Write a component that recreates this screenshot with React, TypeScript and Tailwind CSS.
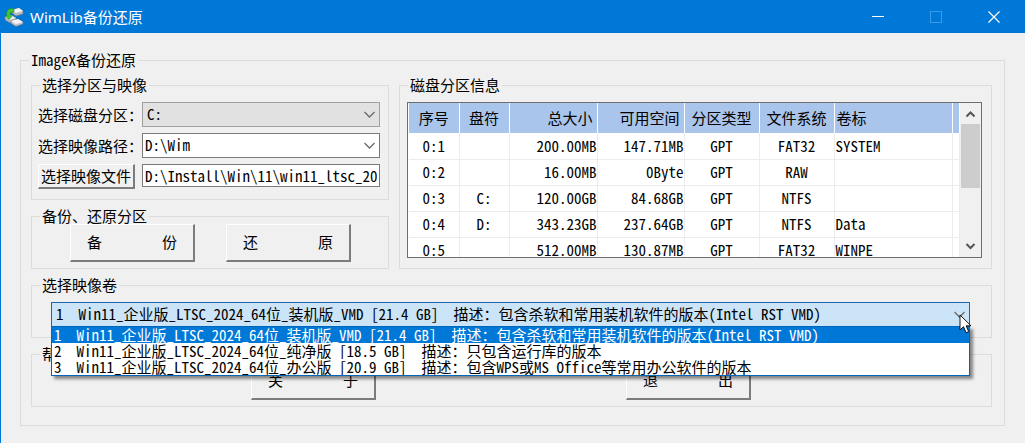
import { useState } from 'react';
import type { ReactNode } from 'react';
import clsx from 'clsx';

interface Partition {
  id: string;
  letter: string;
  total: string;
  free: string;
  type: string;
  fs: string;
  label: string;
}

const PARTITIONS: Partition[] = [
  { id: '0:1', letter: '', total: '200.00MB', free: '147.71MB', type: 'GPT', fs: 'FAT32', label: 'SYSTEM' },
  { id: '0:2', letter: '', total: '16.00MB', free: '0Byte', type: 'GPT', fs: 'RAW', label: '' },
  { id: '0:3', letter: 'C:', total: '120.00GB', free: '84.68GB', type: 'GPT', fs: 'NTFS', label: '' },
  { id: '0:4', letter: 'D:', total: '343.23GB', free: '237.64GB', type: 'GPT', fs: 'NTFS', label: 'Data' },
  { id: '0:5', letter: '', total: '512.00MB', free: '130.87MB', type: 'GPT', fs: 'FAT32', label: 'WINPE' },
];

const VOLUMES = [
  '1\u00a0\u00a0Win11_企业版_LTSC_2024_64位_装机版_VMD [21.4 GB]\u00a0\u00a0描述：包含杀软和常用装机软件的版本(Intel RST VMD)',
  '2\u00a0\u00a0Win11_企业版_LTSC_2024_64位_纯净版 [18.5 GB]\u00a0\u00a0描述：只包含运行库的版本',
  '3\u00a0\u00a0Win11_企业版_LTSC_2024_64位_办公版 [20.9 GB]\u00a0\u00a0描述：包含WPS或MS Office等常用办公软件的版本',
];

function AppIcon() {
  return (
    <svg width="20" height="20" viewBox="0 0 20 20" aria-hidden="true">
      <path d="M8 3l7-2 4 3v3l-7 2-4-3z" fill="#b9bcc0" stroke="#6d7278" strokeWidth="0.6" />
      <path d="M8 3l7-2 4 3-7 2z" fill="#f1f2f3" />
      <path d="M1 10l6-2 5 3v3l-6 2-5-3z" fill="#b4b7bb" stroke="#6d7278" strokeWidth="0.6" />
      <path d="M1 10l6-2 5 3-6 2z" fill="#e8eaeb" />
      <path d="M7 14l7-2 5 3v2l-7 2.500-5-3z" fill="#c3c5d0" stroke="#676b74" strokeWidth="0.6" />
      <path d="M7 14l7-2 5 3-7 2z" fill="#f4f4f6" />
      <path d="M10 2C5 0 1.500 4 3 9l-2-.5L5 12.500l3.500-4-2.300.3C5.500 6 7 5 10 5z" fill="#3fc531" stroke="#1f8a1c" strokeWidth="0.5" />
    </svg>
  );
}

function Chevron() {
  return (
    <svg
      className="pointer-events-none absolute top-1/2 right-1 -translate-y-1/2"
      width="13"
      height="9"
      viewBox="0 0 13 9"
      fill="none"
      aria-hidden="true"
    >
      <path d="M1.500 1.500l5 5 5-5" stroke="#6a6a6a" strokeWidth="1.300" />
    </svg>
  );
}

interface GroupProps {
  title: string;
  className?: string;
  bodyClassName?: string;
  children: ReactNode;
}

function Group({ title, className, bodyClassName, children }: GroupProps) {
  return (
    <fieldset className={clsx('min-w-0 border border-[#dcdcdc]', className)}>
      <legend className="ml-2 px-0.5 leading-4">{title}</legend>
      <div className={bodyClassName}>{children}</div>
    </fieldset>
  );
}

function PushButton({ className, children }: { className?: string; children: ReactNode }) {
  return (
    <button
      type="button"
      className={clsx(
        'border-t border-r-2 border-b-2 border-l border-t-white border-r-[#7c7c7c] border-b-[#7c7c7c] border-l-white bg-[#f0f0f0] text-center whitespace-pre',
        className
      )}
    >
      {children}
    </button>
  );
}

function TitleBar() {
  return (
    <header className="flex h-[33px] items-center bg-[#0078d7] pl-1 text-white">
      <AppIcon />
      <h1 className="ml-1.5 flex-1 font-['Noto_Sans','Noto_Sans_CJK_SC',sans-serif] text-[15px] leading-5 font-normal">
        WimLib备份还原
      </h1>
      <button type="button" aria-label="最小化" className="flex h-full w-[58px] items-center justify-center">
        <svg width="12" height="12" viewBox="0 0 12 12">
          <path d="M0 5.500h12" stroke="#fff" />
        </svg>
      </button>
      <button type="button" aria-label="最大化" disabled className="flex h-full w-[58px] items-center justify-center">
        <svg width="12" height="12" viewBox="0 0 12 12" fill="none">
          <rect x="0.500" y="0.500" width="11" height="11" stroke="#3a9bea" />
        </svg>
      </button>
      <button type="button" aria-label="关闭" className="mr-0.5 flex h-full w-[58px] items-center justify-center">
        <svg width="12" height="12" viewBox="0 0 12 12">
          <path d="M0.500 0.500l11 11M11.500 0.500l-11 11" stroke="#fff" strokeWidth="1.200" />
        </svg>
      </button>
    </header>
  );
}

function PartitionTable() {
  return (
    <div className="flex h-[156px] border border-[#6e6e6e] bg-white pl-px">
      <div className="min-w-0 flex-1 overflow-hidden">
        <table className="w-full table-fixed">
          <colgroup>
            <col className="w-[50px]" />
            <col className="w-[50px]" />
            <col className="w-[88px]" />
            <col className="w-[87px]" />
            <col className="w-[75px]" />
            <col className="w-[75px]" />
            <col />
            <col className="w-[7px]" />
          </colgroup>
          <thead>
            <tr className="h-[30px] bg-[#a9c5ec] [&>th]:border-r [&>th]:border-white [&>th]:font-normal">
              <th>序号</th>
              <th>盘符</th>
              <th className="pr-1 text-right">总大小</th>
              <th className="pr-1 text-right">可用空间</th>
              <th>分区类型</th>
              <th>文件系统</th>
              <th className="pl-0.5 text-left">卷标</th>
              <th aria-hidden="true" />
            </tr>
          </thead>
          <tbody>
            {PARTITIONS.map((p) => (
              <tr
                key={p.id}
                className="h-[26px] text-center [&>td]:border-r [&>td]:border-b [&>td]:border-[#ececec] [&>td]:leading-5"
              >
                <td>{p.id}</td>
                <td>{p.letter}</td>
                <td className="text-right">{p.total}</td>
                <td className="text-right">{p.free}</td>
                <td>{p.type}</td>
                <td>{p.fs}</td>
                <td className="pl-px text-left">{p.label}</td>
                <td />
              </tr>
            ))}
          </tbody>
        </table>
      </div>
      {/* Scrollbar */}
      <div className="flex w-[21px] flex-col items-center bg-[#f0f0f0]">
        <svg width="17" height="21" viewBox="0 0 17 21" fill="none" className="shrink-0" aria-hidden="true">
          <path d="M4.500 13.500l4-4 4 4" stroke="#555" strokeWidth="2" />
        </svg>
        <div className="h-16 w-[19px] bg-[#cdcdcd]" />
        <svg width="17" height="21" viewBox="0 0 17 21" fill="none" className="mt-auto shrink-0" aria-hidden="true">
          <path d="M4.500 8l4 4 4-4" stroke="#555" strokeWidth="2" />
        </svg>
      </div>
    </div>
  );
}

function VolumePicker() {
  const [selected, setSelected] = useState(0);

  return (
    <div className="relative">
      <select
        aria-label="选择映像卷"
        value={selected}
        onChange={(e) => setSelected(Number(e.target.value))}
        className="block h-[25px] w-full appearance-none border border-[#1b66ac] bg-[#cce4f7] pr-5 pl-1"
      >
        {VOLUMES.map((v, i) => (
          <option key={v} value={i}>
            {v}
          </option>
        ))}
      </select>
      <Chevron />

      {/* Opened list */}
      <ul
        role="listbox"
        aria-label="映像卷列表"
        className="absolute inset-x-0 top-6 z-10 border border-[#0067b8] bg-white shadow-[3px_3px_3px_rgba(0,0,0,0.45)]"
      >
        {VOLUMES.map((v, i) => (
          <li
            key={v}
            role="option"
            aria-selected={i === selected}
            onClick={() => setSelected(i)}
            className={clsx('overflow-hidden pl-0.5 leading-4 whitespace-nowrap', i === selected && 'bg-[#0078d7] text-white')}
          >
            {v}
          </li>
        ))}
      </ul>

      {/* Mouse pointer */}
      <svg
        className="pointer-events-none absolute top-3 -right-0.5 z-20"
        width="13"
        height="20"
        viewBox="0 0 13 20"
        aria-hidden="true"
      >
        <path d="M1 1v15l3.500-3.300 2.600 6 2.600-1.100-2.500-5.800H12z" fill="#fff" stroke="#000" strokeWidth="0.900" />
      </svg>
    </div>
  );
}

export default function App() {
  const [disk, setDisk] = useState('C:');
  const [path, setPath] = useState('D:\\Wim');
  const [file, setFile] = useState('D:\\Install\\Win\\11\\win11_ltsc_20');

  return (
    <div className="min-h-screen bg-[#f0f0f0] font-['Noto_Sans_Mono_CJK_SC','Noto_Sans_CJK_SC',monospace] text-[15px] text-black">
      <TitleBar />
      <main className="border-l border-[#0078d7] pt-[19px] pr-5 pb-[17px] pl-[19px]">
        <Group title="ImageX备份还原" bodyClassName="pt-[9px] pr-3 pb-[18px] pl-2.5">
          <div className="flex gap-2.5">
            <div className="flex w-[358px] shrink-0 flex-col gap-2">
              <Group title="选择分区与映像" bodyClassName="pt-[9px] pr-2 pb-2.5 pl-1.5">
                <div className="grid grid-cols-[104px_1fr] gap-y-1.5">
                  <label htmlFor="disk" className="leading-[25px] whitespace-nowrap">选择磁盘分区：</label>
                  <div className="relative">
                    <select
                      id="disk"
                      value={disk}
                      onChange={(e) => setDisk(e.target.value)}
                      className="block h-[25px] w-full appearance-none border border-[#a0a0a0] bg-[#e1e1e1] pl-1"
                    >
                      <option>C:</option>
                      <option>D:</option>
                    </select>
                    <Chevron />
                  </div>
                  <label htmlFor="path" className="leading-[25px] whitespace-nowrap">选择映像路径：</label>
                  <div className="relative">
                    <select
                      id="path"
                      value={path}
                      onChange={(e) => setPath(e.target.value)}
                      className="block h-[25px] w-full appearance-none border border-[#7a7a7a] bg-white pl-0.5"
                    >
                      <option>{'D:\\Wim'}</option>
                    </select>
                    <Chevron />
                  </div>
                  <PushButton className="h-[25px] w-[97px] leading-5">选择映像文件</PushButton>
                  <input
                    type="text"
                    aria-label="映像文件"
                    value={file}
                    onChange={(e) => setFile(e.target.value)}
                    className="h-[23px] w-full min-w-0 border border-[#7a7a7a] bg-white px-0.5"
                  />
                </div>
              </Group>

              <Group title="备份、还原分区" bodyClassName="pb-1.5 pl-[38px]">
                <div className="flex gap-[31px]">
                  <PushButton className="h-[38px] w-[125px]">{'备        份'}</PushButton>
                  <PushButton className="h-[38px] w-[125px]">{'还        原'}</PushButton>
                </div>
              </Group>
            </div>

            <Group title="磁盘分区信息" className="flex-1" bodyClassName="pt-[9px] pr-[9px] pl-[7px]">
              <PartitionTable />
            </Group>
          </div>

          <Group title="选择映像卷" className="mt-2" bodyClassName="pt-[9px] pr-[21px] pb-2.5 pl-[19px]">
            <VolumePicker />
          </Group>

          <Group title="帮助" className="mt-2" bodyClassName="pb-1.5 pl-[219px]">
            <div className="flex gap-[250px]">
              <PushButton className="h-[38px] w-[125px]">{'关        于'}</PushButton>
              <PushButton className="h-[38px] w-[125px]">{'退        出'}</PushButton>
            </div>
          </Group>
        </Group>
      </main>
    </div>
  );
}
